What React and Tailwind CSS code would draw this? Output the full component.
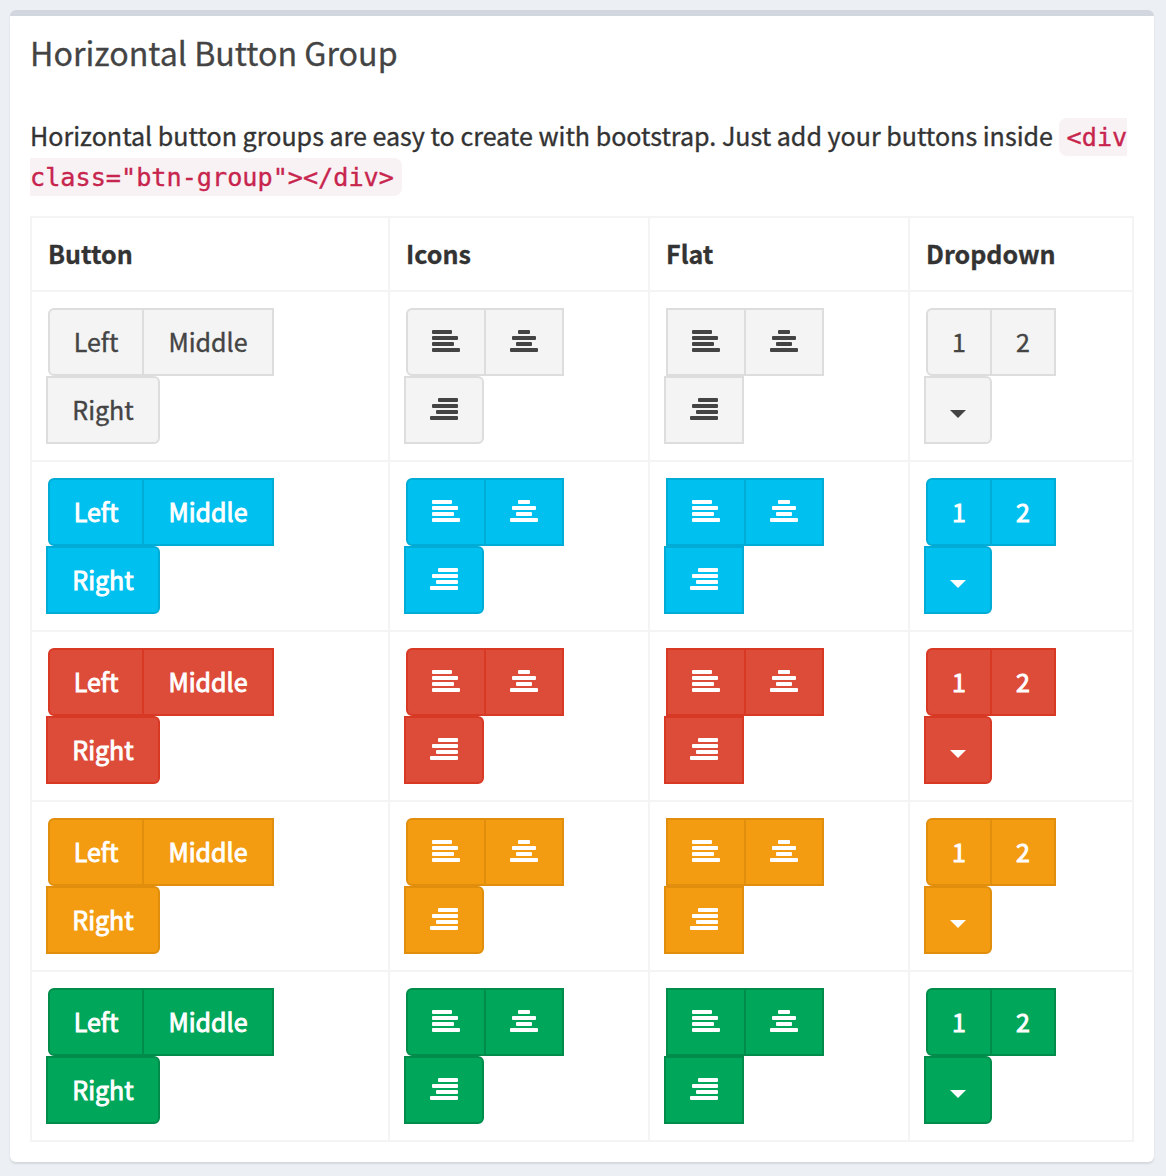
const themes = [
  { name: "default", face: "bg-[#f4f4f4] border-[#dddddd] text-[#444444] [-webkit-text-stroke:0.4px_currentColor]" },
  { name: "info", face: "bg-[#00c0ef] border-[#00acd6] text-white [-webkit-text-stroke:0.9px_currentColor]" },
  { name: "danger", face: "bg-[#dd4b39] border-[#d73925] text-white [-webkit-text-stroke:0.9px_currentColor]" },
  { name: "warning", face: "bg-[#f39c12] border-[#e08e0b] text-white [-webkit-text-stroke:0.9px_currentColor]" },
  { name: "success", face: "bg-[#00a65a] border-[#008d4c] text-white [-webkit-text-stroke:0.9px_currentColor]" },
];

// Each bar is [x, width] on a 28px wide grid.
const bars = {
  left: [[0, 20], [0, 26], [0, 22], [0, 28]],
  center: [[8, 12], [2, 24], [6, 16], [0, 28]],
  right: [[8, 20], [2, 26], [6, 22], [0, 28]],
};

function AlignIcon({ type }) {
  return (
    <svg width="28" height="22" viewBox="0 0 28 22" fill="currentColor" className="mb-[2px] block">
      {bars[type].map(([x, w], i) => (
        <rect key={i} x={x} y={i * 6} width={w} height="4" rx="1" />
      ))}
    </svg>
  );
}

function Caret() {
  return (
    <svg width="16" height="8" viewBox="0 0 16 8" fill="currentColor" className="mt-[8px] block">
      <path d="M0 0H16L8 8Z" />
    </svg>
  );
}

function Button({ face, shape, width, children }) {
  return (
    <button
      type="button"
      className={`flex h-[68px] shrink-0 items-center justify-center border-2 text-[25px] leading-[40px] ${face} ${shape} ${width}`}
    >
      {children}
    </button>
  );
}

function Group({ face, flat, widths, items }) {
  return (
    <div className="flex flex-wrap items-start">
      <Button face={face} shape={flat ? "" : "rounded-l-[6px]"} width={widths[0]}>
        {items[0]}
      </Button>
      <Button face={face} shape="-ml-[2px]" width={widths[1]}>
        {items[1]}
      </Button>
      <div className="basis-full" />
      <Button face={face} shape={flat ? "-ml-[2px]" : "-ml-[2px] rounded-r-[6px]"} width={widths[2]}>
        {items[2]}
      </Button>
    </div>
  );
}

const iconItems = [
  <AlignIcon key="l" type="left" />,
  <AlignIcon key="c" type="center" />,
  <AlignIcon key="r" type="right" />,
];
const iconWidths = ["w-[80px]", "w-[80px]", "w-[80px]"];

function Cell({ children }) {
  return <div className="border-r-2 border-b-2 border-[#f4f4f4] p-4">{children}</div>;
}

function Label({ children }) {
  return <span className="mb-[2px]">{children}</span>;
}

export default function App() {
  return (
    <div className="h-[1176px] w-[1166px] bg-[#ecf0f5] px-[10px] pt-[10px] font-['Noto_Sans_CJK_SC',sans-serif] text-[#333333]">
      <section className="h-[1152px] w-[1144px] rounded-[6px] border-t-[6px] border-[#d2d6de] bg-white px-5 shadow-[0_2px_2px_rgba(0,0,0,0.1)]">
        <h3 className="pt-[16px] text-[32.2px] leading-[40px] whitespace-nowrap text-[#444444] [-webkit-text-stroke:0.3px_currentColor]">
          Horizontal Button Group
        </h3>
        <p className="mt-[43px] h-[101px] text-[25.07px] leading-[40px] [-webkit-text-stroke:0.35px_currentColor]">
          Horizontal button groups are easy to create with bootstrap. Just add your buttons inside{" "}
          <code className="rounded-[8px] bg-[#f9f2f4] px-2 pt-[5px] pb-1 font-['DejaVu_Sans_Mono',monospace] text-[25.2px] leading-none text-[#c7254e]">
            &lt;div class="btn-group"&gt;&lt;/div&gt;
          </code>
        </p>
        <div className="grid w-[1104px] grid-cols-[358px_260px_260px_224px] grid-rows-[74px_repeat(5,170px)] border-t-2 border-l-2 border-[#f4f4f4]">
          {["Button", "Icons", "Flat", "Dropdown"].map((title) => (
            <Cell key={title}>
              <div className="text-[25.06px] leading-[38px] font-bold [-webkit-text-stroke:0.3px_currentColor]">{title}</div>
            </Cell>
          ))}
          {themes.map(({ name, face }) => (
            <div key={name} className="contents">
              <Cell>
                <Group
                  face={face}
                  widths={["w-[96px]", "w-[132px]", "w-[114px]"]}
                  items={[<Label key="l">Left</Label>, <Label key="m">Middle</Label>, <Label key="r">Right</Label>]}
                />
              </Cell>
              <Cell>
                <Group face={face} widths={iconWidths} items={iconItems} />
              </Cell>
              <Cell>
                <Group face={face} flat widths={iconWidths} items={iconItems} />
              </Cell>
              <Cell>
                <Group
                  face={face}
                  widths={["w-[66px]", "w-[66px]", "w-[68px]"]}
                  items={[<Label key="1">1</Label>, <Label key="2">2</Label>, <Caret key="c" />]}
                />
              </Cell>
            </div>
          ))}
        </div>
      </section>
    </div>
  );
}
